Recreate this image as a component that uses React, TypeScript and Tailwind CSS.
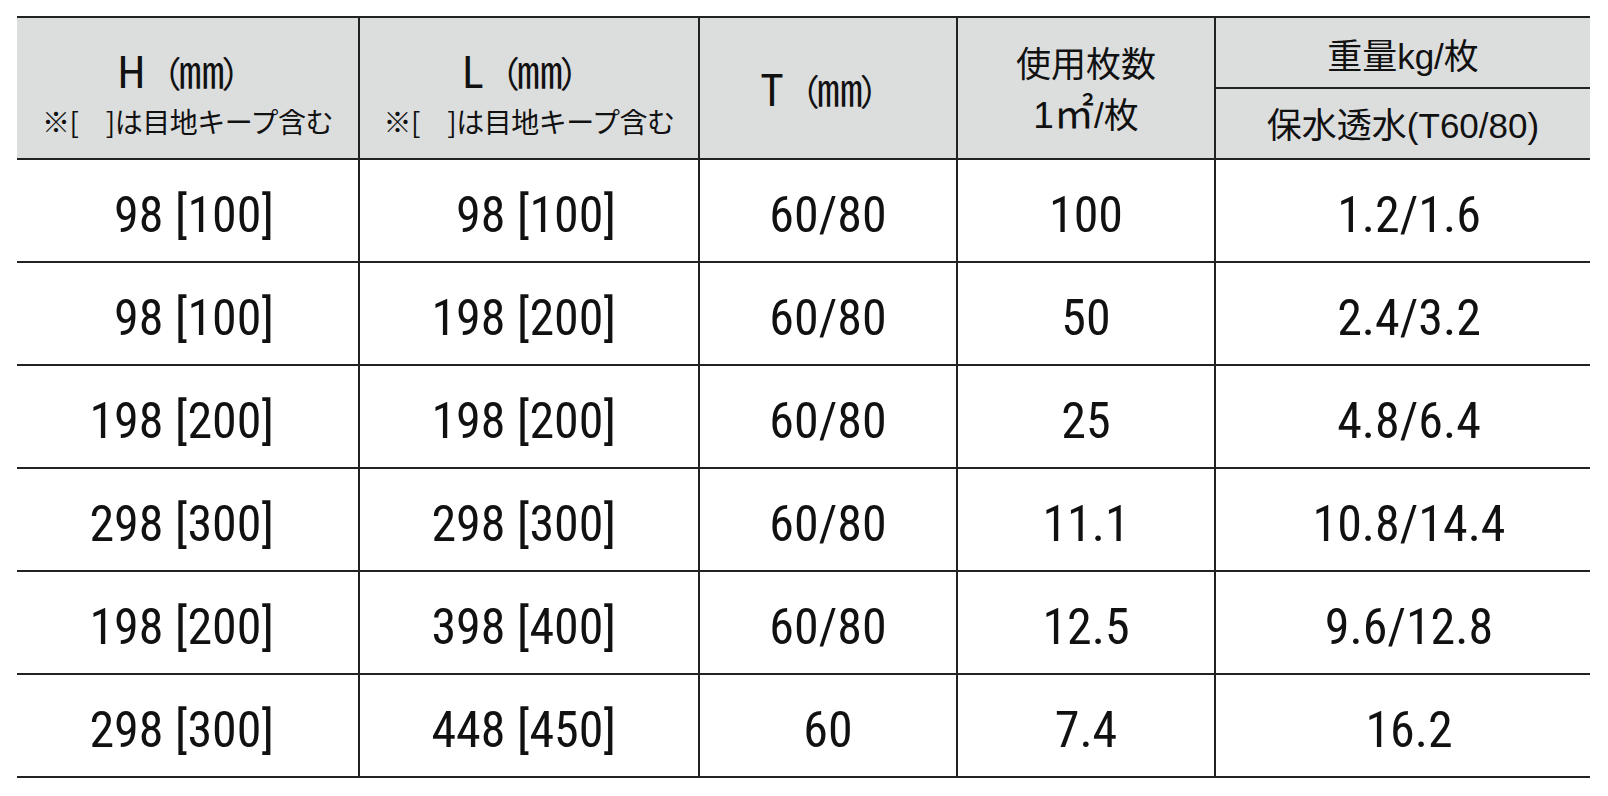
import React from 'react';

const num = "font-['Roboto_Condensed','Noto_Sans_CJK_JP',sans-serif]";
const jp = "font-['Liberation_Sans','Noto_Sans_CJK_JP',sans-serif]";
const cjk = "font-['Noto_Sans_CJK_JP',sans-serif]";

const rows = [
  ['98 [100]', '98 [100]', '60/80', '100', '1.2/1.6'],
  ['98 [100]', '198 [200]', '60/80', '50', '2.4/3.2'],
  ['198 [200]', '198 [200]', '60/80', '25', '4.8/6.4'],
  ['298 [300]', '298 [300]', '60/80', '11.1', '10.8/14.4'],
  ['198 [200]', '398 [400]', '60/80', '12.5', '9.6/12.8'],
  ['298 [300]', '448 [450]', '60', '7.4', '16.2'],
];

const DimHead = ({ letter, note }: { letter: string; note?: boolean }) => (
  <div className="flex flex-col items-center">
    <div className="flex items-baseline leading-none">
      <span className={`${num} text-[45px]`}>{letter}</span>
      <span className={`${cjk} text-[36px]`}>（</span>
      <span className={`${cjk} text-[46px] -mx-[3px]`}>㎜</span>
      <span className={`${cjk} text-[36px]`}>）</span>
    </div>
    {note && (
      <div className={`${cjk} text-[28px] tracking-[-0.5px] leading-none mt-[12px]`}>※[　]は目地キープ含む</div>
    )}
  </div>
);

const App = () => {
  const line = 'border-[#222] border-solid';
  return (
    <div className="w-[1608px] h-[796px] bg-white pt-[16px] pl-[17px] text-[#111]">
      <table className="border-collapse table-fixed w-[1573px]">
        <colgroup>
          <col className="w-[342px]" />
          <col className="w-[340px]" />
          <col className="w-[258px]" />
          <col className="w-[258px]" />
          <col className="w-[375px]" />
        </colgroup>
        <thead className="bg-[#dcdddd]">
          <tr className="h-[71px]">
            <th rowSpan={2} className={`${line} border-y-2 font-normal pt-1`}>
              <DimHead letter="H" note />
            </th>
            <th rowSpan={2} className={`${line} border-y-2 border-l-2 font-normal pt-1`}>
              <DimHead letter="L" note />
            </th>
            <th rowSpan={2} className={`${line} border-y-2 border-l-2 font-normal`}>
              <DimHead letter="T" />
            </th>
            <th rowSpan={2} className={`${line} border-y-2 border-l-2 font-normal`}>
              <div className={`${jp} text-[35px] leading-[47px] pt-1`}>
                <div>使用枚数</div>
                <div className="flex items-baseline justify-center">
                  <span className="text-[37px]">1</span>
                  <span className={`${cjk} text-[40px]`}>㎡</span>
                  <span>/枚</span>
                </div>
              </div>
            </th>
            <th className={`${line} border-y-2 border-l-2 font-normal`}>
              <div className={`${jp} text-[35px] leading-none pt-2`}>重量kg/枚</div>
            </th>
          </tr>
          <tr className="h-[71px]">
            <th className={`${line} border-b-2 border-l-2 font-normal`}>
              <div className={`${jp} text-[35px] leading-none pt-1`}>保水透水(T60/80)</div>
            </th>
          </tr>
        </thead>
        <tbody>
          {rows.map((r, i) => (
            <tr key={i} className={`h-[103px] ${num} text-[50px]`}>
              <td className={`${line} border-b-2 text-right pr-[84px] pt-[9px]`}>{r[0]}</td>
              <td className={`${line} border-b-2 border-l-2 text-right pr-[82px] pt-[9px]`}>{r[1]}</td>
              <td className={`${line} border-b-2 border-l-2 text-center pt-[9px]`}>{r[2]}</td>
              <td className={`${line} border-b-2 border-l-2 text-center pt-[9px]`}>{r[3]}</td>
              <td className={`${line} border-b-2 border-l-2 text-center pl-3 pt-[9px]`}>{r[4]}</td>
            </tr>
          ))}
        </tbody>
      </table>
    </div>
  );
};

export default App;
